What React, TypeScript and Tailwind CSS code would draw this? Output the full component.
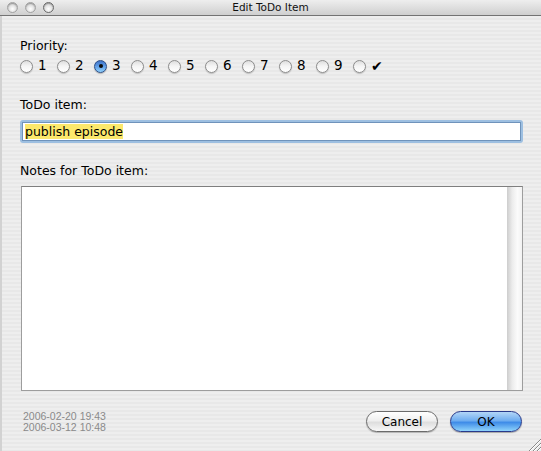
import React from 'react';

const PRIORITIES = ['1', '2', '3', '4', '5', '6', '7', '8', '9', '✔'];

function TrafficLight({ dark }: { dark?: boolean }) {
  return (
    <div
      className={`w-[11px] h-[11px] rounded-full border ${
        dark ? 'border-[#6a6a6a]' : 'border-[#a2a2a2]'
      } bg-[radial-gradient(circle_at_50%_65%,#ffffff_0%,#e4e4e4_45%,#b9b9b9_100%)] shadow-[inset_0_1px_1px_rgba(0,0,0,0.25)]`}
    />
  );
}

function Radio({ checked }: { checked?: boolean }) {
  if (checked) {
    return (
      <div className="w-[13px] h-[13px] rounded-full border border-[#2b4d86] bg-[linear-gradient(#3f74c9_0%,#5d9be6_45%,#8fd0fb_100%)] shadow-[0_1px_1px_rgba(0,0,0,0.25)] flex items-center justify-center">
        <div className="w-[4px] h-[4px] rounded-full bg-[#0b0b0b]" />
      </div>
    );
  }
  return (
    <div className="w-[13px] h-[13px] rounded-full border border-[#8c8c8c] bg-[linear-gradient(#dedede_0%,#f4f4f4_45%,#ffffff_100%)] shadow-[0_1px_1px_rgba(0,0,0,0.2)]" />
  );
}

export default function App() {
  return (
    <div className="relative w-[541px] h-[451px] overflow-hidden font-['DejaVu_Sans',sans-serif] text-black">
      {/* title bar */}
      <div className="relative h-[16px] border-b border-[#737373] bg-[linear-gradient(#eeeeee,#cfcfcf)] flex items-center">
        <div className="flex items-center gap-[7px] pl-[7px]">
          <TrafficLight />
          <TrafficLight />
          <TrafficLight dark />
        </div>
        <div className="absolute inset-0 flex items-center justify-center text-[10.5px] leading-none text-[#111]">
          Edit ToDo Item
        </div>
      </div>

      {/* body */}
      <div className="h-[435px] border-l-2 border-[#d2d2d2] bg-[repeating-linear-gradient(180deg,#eeeeee_0px,#eeeeee_2px,#e8e8e8_2px,#e8e8e8_4px)] pl-[18px] pr-[18px] pt-[22px] flex flex-col text-[12.5px]">
        <div className="leading-[15px] h-[15px]">Priority:</div>

        <div className="mt-[6px] h-[14px] flex items-center">
          {PRIORITIES.map((p, i) => (
            <div key={p} className="w-[37px] flex items-center">
              <Radio checked={i === 2} />
              <span className={`ml-[5px] leading-none ${i === 9 ? 'text-[14px]' : 'text-[13.5px]'}`}>{p}</span>
            </div>
          ))}
        </div>

        <div className="mt-[24px] leading-[15px] h-[15px]">ToDo item:</div>

        <div className="mt-[8px] h-[23px] w-[503px] rounded-[3px] bg-[#9dbfe1] p-[2px]">
          <div className="h-full border border-[#6f93bb] bg-white flex items-center pl-[2px]">
            <span className="bg-[#fce86c] leading-[15px] text-[12.5px]">publish episode</span>
          </div>
        </div>

        <div className="mt-[20px] leading-[15px] h-[15px]">Notes for ToDo item:</div>

        <div className="mt-[8px] ml-[1px] h-[205px] w-[502px] border border-[#9d9d9d] border-t-[#7f7f7f] bg-white flex">
          <div className="flex-1" />
          <div className="w-[15px] h-full bg-[linear-gradient(90deg,#cdcdcd_0%,#ececec_35%,#fbfbfb_70%,#f2f2f2_100%)]" />
        </div>

        <div className="mt-[20px] h-[21px] flex items-center">
          <div className="ml-[3px] font-['Liberation_Sans',sans-serif] text-[10.5px] leading-[11px] text-[#8a8a8a]">
            <div>2006-02-20 19:43</div>
            <div>2006-03-12 10:48</div>
          </div>
          <div className="ml-auto mr-[1px] flex gap-[12px]">
            <button className="w-[72px] h-[21px] rounded-full border border-[#6b6b6b] bg-[linear-gradient(#ffffff_0%,#efefef_45%,#dedede_55%,#f8f8f8_100%)] shadow-[0_1px_1px_rgba(0,0,0,0.25)] text-[12px] leading-none">
              Cancel
            </button>
            <button className="w-[72px] h-[21px] rounded-full border border-[#28398a] bg-[linear-gradient(#b3d6f7_0%,#6fadf0_45%,#3f8ce8_55%,#8fd3fb_100%)] shadow-[0_1px_1px_rgba(0,0,0,0.3)] text-[12px] leading-none">
              OK
            </button>
          </div>
        </div>
      </div>

      {/* resize grip */}
      <svg className="absolute right-0 bottom-0" width="14" height="14" viewBox="0 0 14 14">
        <g stroke="#8a8a8a" strokeWidth="1">
          <line x1="14" y1="2" x2="2" y2="14" />
          <line x1="14" y1="6" x2="6" y2="14" />
          <line x1="14" y1="10" x2="10" y2="14" />
        </g>
        <g stroke="#ffffff" strokeWidth="1">
          <line x1="14" y1="3" x2="3" y2="14" />
          <line x1="14" y1="7" x2="7" y2="14" />
          <line x1="14" y1="11" x2="11" y2="14" />
        </g>
      </svg>
    </div>
  );
}
